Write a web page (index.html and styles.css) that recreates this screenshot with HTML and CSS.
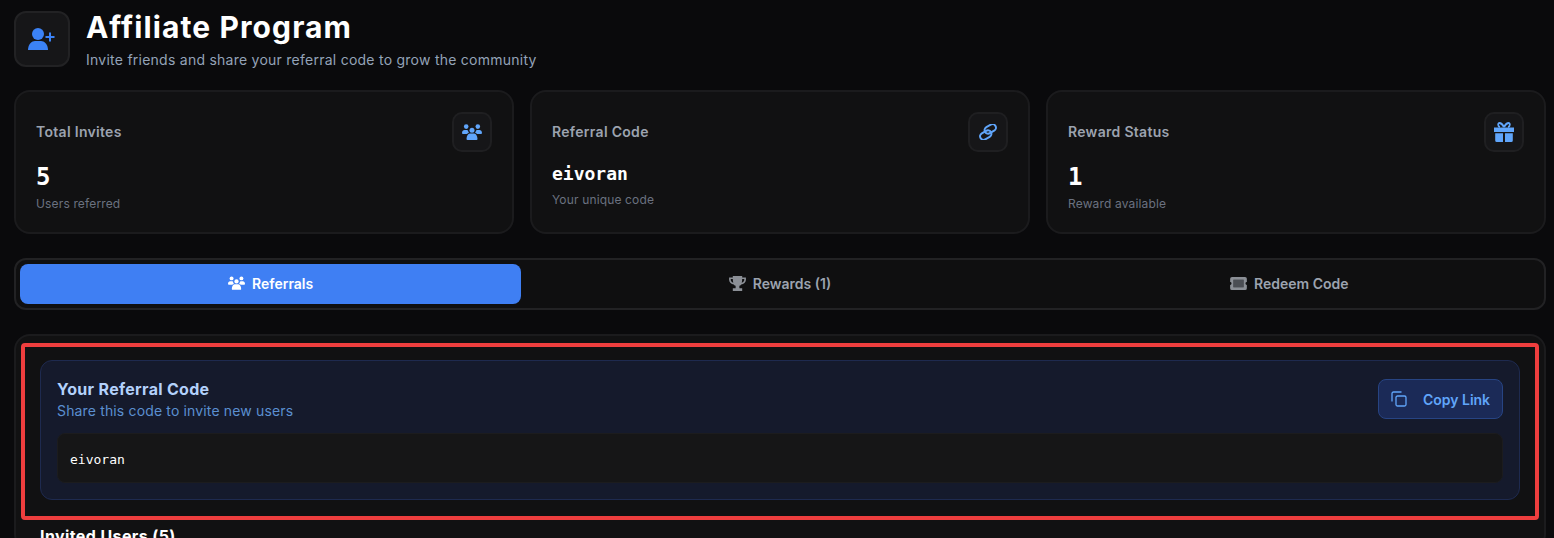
FILE: index.html
```html
<!DOCTYPE html>
<html lang="en">
<head>
  <meta charset="UTF-8">
  <title>Affiliate Program</title>
  <link rel="stylesheet" href="styles.css">
</head>
<body>
<div class="page">
  <div class="head">
    <div class="headIcon">
      <svg width="28" height="24" viewBox="0 0 28 24"><circle cx="10" cy="7" r="6"/><path d="M0 23c0-6 4-9 7-9h6c3 0 7 3 7 9z"/><path d="M22 5.500v9M17.500 10h9" class="plus"/></svg>
    </div>
    <div>
      <h1 class="title">Affiliate Program</h1>
      <p class="subtitle">Invite friends and share your referral code to grow the community</p>
    </div>
  </div>

  <div class="stats">
    <div class="card">
      <div class="cardText">
        <div class="cardLabel">Total Invites</div>
        <div class="cardNum">5</div>
        <div class="cardSub">Users referred</div>
      </div>
      <div class="cardIcon">
        <svg width="20" height="16" viewBox="0 0 20 16"><circle cx="4.200" cy="2.600" r="2.300"/><circle cx="15.800" cy="2.600" r="2.300"/><circle cx="10" cy="6.200" r="2.500"/><path d="M0 9c0-2 1.200-3 2.500-3h3c.3 1 .8 1.800 1.500 2.500C6 9 5.500 9.500 5 10H1a1 1 0 0 1-1-1zM20 9c0-2-1.200-3-2.500-3h-3c-.3 1-.8 1.800-1.500 2.500 1 .5 1.500 1 2 1.500h4a1 1 0 0 0 1-1zM4.500 15c0-3.500 1.800-5.500 3.500-5.500h4c1.700 0 3.500 2 3.500 5.500a1 1 0 0 1-1 1h-9a1 1 0 0 1-1-1z"/></svg>
      </div>
    </div>
    <div class="card">
      <div class="cardText">
        <div class="cardLabel">Referral Code</div>
        <div class="cardCode">eivoran</div>
        <div class="cardSub">Your unique code</div>
      </div>
      <div class="cardIcon">
        <svg width="20" height="16" viewBox="0 0 20 16" class="linkIcon"><g transform="rotate(-30 10 8)"><rect x="0.500" y="6" width="12" height="7" rx="3.500"/><rect x="7.500" y="3" width="12" height="7" rx="3.500"/></g></svg>
      </div>
    </div>
    <div class="card">
      <div class="cardText">
        <div class="cardLabel">Reward Status</div>
        <div class="cardNum">1</div>
        <div class="cardSub">Reward available</div>
      </div>
      <div class="cardIcon">
        <svg width="20" height="20" viewBox="0 0 20 20"><path d="M0 5.500h20v4.500H0zM1.200 11.200h7.800V20H2.700a1.500 1.500 0 0 1-1.500-1.500zM11 11.200h7.800v7.300a1.500 1.500 0 0 1-1.500 1.500H11z"/><path d="M10 5C8 1.500 6.800 1 5.500 1 3.800 1 3.500 4.500 6 5M10 5c2-3.500 3.200-4 4.500-4 1.700 0 2 3.500-.5 4" class="bow"/></svg>
      </div>
    </div>
  </div>

  <div class="tabs">
    <button class="tab tabOn">
      <svg width="17" height="14" viewBox="0 0 20 16"><circle cx="4.200" cy="2.600" r="2.300"/><circle cx="15.800" cy="2.600" r="2.300"/><circle cx="10" cy="6.200" r="2.500"/><path d="M0 9c0-2 1.200-3 2.500-3h3c.3 1 .8 1.800 1.500 2.500C6 9 5.500 9.500 5 10H1a1 1 0 0 1-1-1zM20 9c0-2-1.200-3-2.500-3h-3c-.3 1-.8 1.800-1.500 2.500 1 .5 1.500 1 2 1.500h4a1 1 0 0 0 1-1zM4.500 15c0-3.500 1.800-5.500 3.500-5.500h4c1.700 0 3.500 2 3.500 5.500a1 1 0 0 1-1 1h-9a1 1 0 0 1-1-1z"/></svg>
      Referrals
    </button>
    <button class="tab">
      <svg width="17" height="15" viewBox="0 0 18 16"><path d="M4 0h10v1.500h4v2.500c0 3-2.500 4.500-5 5-.6.800-1.300 1.300-2 1.500v2.500h3V16H4v-3h3v-2.500c-.7-.2-1.400-.7-2-1.500-2.500-.5-5-2-5-5V1.500h4zM1.800 3.200v.8c0 1.500 1 2.500 2.700 3.200-.3-1.200-.5-2.600-.5-4zm14.400 0H14c0 1.400-.2 2.800-.5 4 1.700-.7 2.700-1.700 2.700-3.200z"/></svg>
      Rewards (1)
    </button>
    <button class="tab">
      <svg width="17" height="13" viewBox="0 0 18 14"><rect x="3.500" y="3" width="11" height="8" class="ticketIn"/><path fill-rule="evenodd" d="M2 0h14a2 2 0 0 1 2 2v3.500a1.500 1.500 0 0 0 0 3V12a2 2 0 0 1-2 2H2a2 2 0 0 1-2-2V8.500a1.500 1.500 0 0 0 0-3V2a2 2 0 0 1 2-2zm1.500 3v8h11V3z"/></svg>
      Redeem Code
    </button>
  </div>

  <div class="panel">
    <div class="marked">
      <div class="codeBox">
        <div class="codeTop">
          <div>
            <h3 class="codeTitle">Your Referral Code</h3>
            <p class="codeHint">Share this code to invite new users</p>
          </div>
          <button class="copyBtn">
            <svg width="16" height="16" viewBox="0 0 16 16"><rect x="5" y="5" width="10" height="10" rx="1.500"/><path d="M1 10.500V2.500A1.500 1.500 0 0 1 2.500 1h8"/></svg>
            Copy Link
          </button>
        </div>
        <div class="codeValue">eivoran</div>
      </div>
    </div>
    <h3 class="invited">Invited Users (5)</h3>
  </div>
</div>
</body>
</html>
```
FILE: styles.css
```css
html,body{
  margin: 0;
  padding: 0;
  height: 100%;
  overflow: hidden;
  background: #0a0a0c;
  color: #fff;
  font-family: "Inter", "Liberation Sans", sans-serif;
}
.page{
  padding: 11px 8px 0 14px;
}
.head{
  display: flex;
  align-items: flex-start;
  gap: 16px;
  height: 79px;
}
.headIcon{
  width: 52px;
  height: 52px;
  border: 2px solid #222224;
  border-radius: 12px;
  background: #161618;
  display: flex;
  align-items: center;
  justify-content: center;
}
.headIcon svg{
  fill: #3b82f6;
}
.headIcon .plus{
  fill: none;
  stroke: #3b82f6;
  stroke-width: 2;
}
.title{
  margin: 0;
  font-size: 30px;
  line-height: 32px;
  font-weight: 700;
  letter-spacing: 1.1px;
}
.subtitle{
  margin: 7px 0 0;
  font-size: 14px;
  line-height: 20px;
  letter-spacing: 0.25px;
  color: #94a3b8;
}
.stats{
  display: grid;
  grid-template-columns: repeat(3, 1fr);
  gap: 16px;
}
.card{
  height: 140px;
  border: 2px solid #1b1b1d;
  border-radius: 16px;
  background: #111112;
  padding: 0 20px;
  display: flex;
  justify-content: space-between;
  align-items: flex-start;
}
.cardText{
  padding-top: 30px;
}
.cardLabel{
  font-size: 14px;
  line-height: 20px;
  font-weight: 600;
  letter-spacing: 0.3px;
  color: #9ca3af;
}
.cardNum{
  margin-top: 19px;
  font-family: "DejaVu Sans Mono", monospace;
  font-size: 24px;
  line-height: 32px;
  font-weight: 700;
}
.cardCode{
  margin-top: 18px;
  font-family: "DejaVu Sans Mono", monospace;
  font-size: 18px;
  line-height: 28px;
  font-weight: 700;
  margin-bottom: 4px;
}
.cardSub{
  font-size: 12px;
  line-height: 16px;
  margin-top: 3px;
  letter-spacing: 0.15px;
  color: #6b7280;
}
.cardIcon{
  margin-top: 20px;
  width: 36px;
  height: 36px;
  border: 2px solid #1f1f21;
  border-radius: 10px;
  background: #161618;
  display: flex;
  align-items: center;
  justify-content: center;
}
.cardIcon svg{
  fill: #60a5fa;
}
.cardIcon .linkIcon{
  fill: none;
  stroke: #60a5fa;
  stroke-width: 2;
}
.cardIcon .bow{
  fill: none;
  stroke: #60a5fa;
  stroke-width: 1.800;
}
.tabs{
  margin-top: 24px;
  height: 40px;
  padding: 4px;
  border: 2px solid #222224;
  border-radius: 12px;
  background: #0f0f10;
  display: grid;
  grid-template-columns: repeat(3, 1fr);
  gap: 8px;
}
.tab{
  border: 0;
  border-radius: 8px;
  background: none;
  font-family: inherit;
  font-size: 14px;
  font-weight: 600;
  color: #9ca3af;
  display: flex;
  align-items: center;
  justify-content: center;
  gap: 7px;
  padding: 0 0 2px;
}
.tab svg{
  fill: #8b8f96;
}
.tab .ticketIn{
  fill: #4b4e54;
}
.tabOn{
  background: #3f7ff3;
  color: #fff;
}
.tabOn svg{
  fill: #fff;
}
.panel{
  margin-top: 24px;
  border: 2px solid #1b1b1d;
  border-radius: 16px;
  background: #111112;
  padding: 7px 5px 0;
}
.marked{
  border: 4px solid #ef3e3e;
  border-radius: 4px;
  padding: 13px 15px 16px;
}
.codeBox{
  height: 138px;
  border: 1px solid #1e2a4f;
  border-radius: 12px;
  background: #151a2c;
  padding: 0 16px;
}
.codeTop{
  display: flex;
  justify-content: space-between;
  align-items: flex-start;
  height: 72px;
  padding-top: 18px;
  box-sizing: border-box;
}
.codeTitle{
  margin: 0;
  font-size: 16px;
  line-height: 20px;
  font-weight: 700;
  letter-spacing: 0.3px;
  color: #b3d1fb;
}
.codeHint{
  margin: 3px 0 0;
  font-size: 14px;
  line-height: 18px;
  letter-spacing: 0.15px;
  color: #5b8fd0;
}
.copyBtn{
  width: 125px;
  height: 40px;
  border: 1px solid #274483;
  border-radius: 8px;
  background: #1b2a57;
  font-family: inherit;
  font-size: 14px;
  font-weight: 600;
  color: #60a5fa;
  display: flex;
  align-items: center;
  justify-content: center;
  gap: 16px;
  padding: 0;
}
.copyBtn svg{
  fill: none;
  stroke: #60a5fa;
  stroke-width: 1.300;
}
.codeValue{
  height: 45px;
  padding: 3px 12px 0;
  line-height: 46px;
  border: 1px solid #1c1c1e;
  border-radius: 8px;
  background: #161617;
  font-family: "DejaVu Sans Mono", monospace;
  font-size: 13px;
  color: #fff;
}
.invited{
  margin: 4px 0 0 19px;
  font-size: 16px;
  line-height: 24px;
  font-weight: 700;
  letter-spacing: 0.4px;
}
```
